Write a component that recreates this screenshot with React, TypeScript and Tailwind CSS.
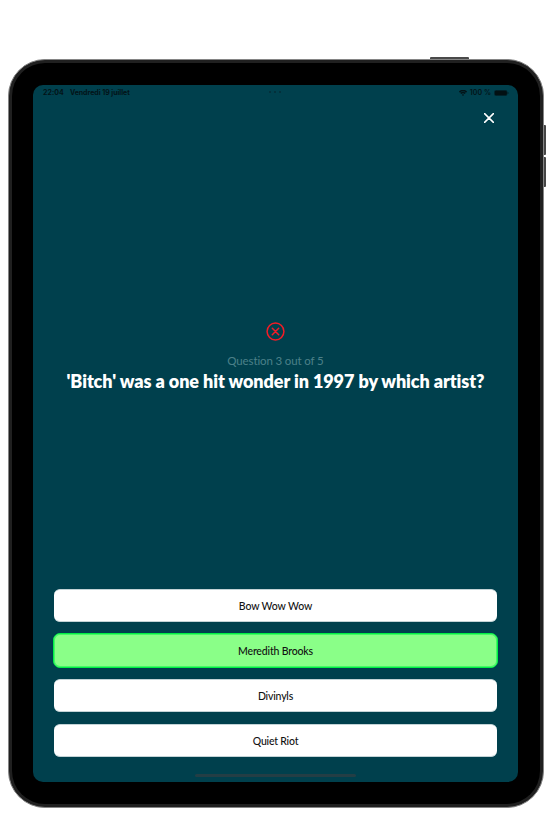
import React from "react";

const textFont = "font-['Lato','Liberation_Sans',sans-serif]";

function StatusBar() {
  return (
    <div className="relative flex h-[14px] shrink-0 items-center justify-between pl-[10px] pr-[9px] font-['Inter','Liberation_Sans',sans-serif] text-[7px] font-bold leading-[14px] text-[#031317]">
      <div className="flex gap-[6px] whitespace-pre pt-px">
        <span className="tracking-[0.05px]">22:04</span>
        <span className="tracking-[-0.03px]">Vendredi 19 juillet</span>
      </div>
      <div className="absolute left-[236px] top-[6px] flex gap-[3px]">
        <i className="size-[2px] bg-[#03303b]" />
        <i className="size-[2px] bg-[#03303b]" />
        <i className="size-[2px] bg-[#03303b]" />
      </div>
      <div className="flex items-center pt-px">
        <svg className="mr-[3px] h-[6px] w-[8px]" viewBox="0 0 16 12" fill="none" stroke="#031317" strokeWidth="3">
          <path d="M1 4.3C5-.1 11-.1 15 4.3M3.7 7.2c2.6-2.7 6-2.7 8.6 0" />
          <path d="M8 12 5.7 9.6c1.4-1.4 3.2-1.4 4.6 0Z" fill="#031317" stroke="none" />
        </svg>
        <span className="mr-[3px] font-semibold tracking-[0.05px]">100 %</span>
        <svg className="h-[6px] w-[15px]" viewBox="0 0 15 6">
          <rect x=".4" y=".3" width="12.8" height="5.4" rx="1.8" fill="#021013" stroke="#032b35" strokeWidth=".6" />
          <path d="M14 2v2" stroke="#03242c" />
        </svg>
      </div>
    </div>
  );
}

function Answer({ label, spacing, correct = false }: { label: string; spacing: string; correct?: boolean }) {
  return (
    <button
      className={
        correct
          ? "-mx-px flex h-[35px] items-center justify-center rounded-[7px] border border-[#00f045] bg-[#8aff88] shadow-[inset_0_0_0_1px_#45f765]"
          : "flex h-[33px] items-center justify-center rounded-[6px] border-y border-[#c3d3d6] bg-white"
      }
    >
      <span className={`whitespace-nowrap pt-[2px] text-[10.5px] font-medium leading-none text-[#111] ${spacing}`}>{label}</span>
    </button>
  );
}

export default function App() {
  return (
    <main className={`h-[815px] w-[551px] overflow-hidden bg-white pl-[8px] pt-[59px] ${textFont}`}>
      <div className="relative h-[749px] w-[536px]">
        <i className="absolute left-[422px] top-[-2px] h-[4px] w-[39px] rounded-t-[1px] bg-[#4a4a4a]" />
        <i className="absolute left-[534px] top-[66px] h-[30px] w-[4px] rounded-r-[1px] bg-[#454545]" />
        <i className="absolute left-[534px] top-[98px] h-[30px] w-[4px] rounded-r-[1px] bg-[#454545]" />
        <div className="relative h-full rounded-[37px] border border-[#858585] bg-[#202020] p-[3px]">
          <div className="h-full rounded-[33px] bg-black pl-[21px] pt-[22px]">
            <section className="flex h-[697px] w-[485px] flex-col overflow-hidden rounded-[10px] bg-[#00404d]">
              <StatusBar />
              <div className="flex h-[38px] shrink-0 justify-end pr-[24px] pt-[14px]">
                <svg className="size-[10px]" viewBox="0 0 10 10" stroke="white" strokeWidth="1.5" strokeLinecap="round">
                  <path d="m.6.6 8.8 8.8M9.4.6.6 9.4" />
                </svg>
              </div>
              <div className="flex h-[452px] shrink-0 flex-col items-center pt-[185px]">
                <svg className="size-[19px]" viewBox="0 0 19 19" fill="none" stroke="#f31c27" strokeWidth="1.5" strokeLinecap="round">
                  <circle cx="9.5" cy="9.5" r="8.4" />
                  <path d="m6.3 6.3 6.4 6.4m0-6.4-6.4 6.4" />
                </svg>
                <p className="mt-[13px] whitespace-nowrap text-[11.5px] leading-[14px] tracking-[-0.13px] text-[#4c8089]">Question 3 out of 5</p>
                <h1 className="mt-px whitespace-nowrap text-[18px] font-extrabold leading-[24px] tracking-[-0.08px] text-white">'Bitch' was a one hit wonder in 1997 by which artist?</h1>
              </div>
              <div className="flex flex-col pl-[21px] pr-[21px]">
                <Answer label="Bow Wow Wow" spacing="tracking-[-0.1px]" />
                <div className="mb-[11px] mt-[11px] flex flex-col"><Answer label="Meredith Brooks" spacing="tracking-[-0.17px]" correct /></div>
                <Answer label="Divinyls" spacing="tracking-[-0.2px]" />
                <div className="mt-[12px] flex flex-col"><Answer label="Quiet Riot" spacing="tracking-[-0.2px]" /></div>
              </div>
              <i className="mx-auto mt-[17px] h-[3px] w-[161px] shrink-0 rounded-full bg-[#233e45]" />
            </section>
          </div>
        </div>
      </div>
    </main>
  );
}
